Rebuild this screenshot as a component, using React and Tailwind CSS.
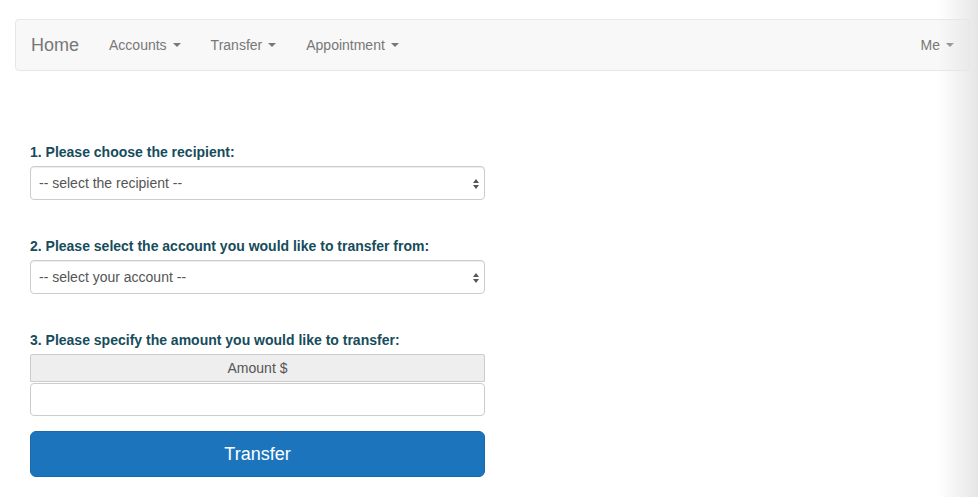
import { useState } from 'react';

function Caret() {
  return <span className="ml-[6px] inline-block h-0 w-0 border-x-4 border-t-4 border-x-transparent border-t-[#777] align-middle" />;
}

function NavItem({ label }) {
  return (
    <a className="flex items-center px-[15px] text-[14px] text-[#777]">
      {label}
      <Caret />
    </a>
  );
}

function SelectBox({ placeholder }) {
  return (
    <div className="relative mt-[3px] flex h-[34px] items-center rounded-[4px] border border-[#ccc] bg-white pl-[8px] text-[14px] text-[#555] shadow-[inset_0_1px_1px_rgba(0,0,0,0.075)]">
      {placeholder}
      <svg className="absolute right-[4px] top-[11px]" width="8" height="12" viewBox="0 0 8 12">
        <path d="M4 1 L7 5 H1 Z" fill="#555" />
        <path d="M4 11 L7 7 H1 Z" fill="#555" />
      </svg>
    </div>
  );
}

function Label({ children }) {
  return <label className="block text-[14px] leading-[21px] font-bold text-[#164c5c]">{children}</label>;
}

export default function App() {
  const [amount, setAmount] = useState('');

  return (
    <div className="relative h-[497px] w-[978px] overflow-hidden bg-white pt-[19px] font-['Liberation_Sans',Arial,sans-serif]">
      {/* Navbar */}
      <nav className="mx-[15px] mr-[8px] flex h-[52px] items-center rounded-[4px] border border-[#e7e7e7] bg-[#f8f8f8]">
        <a className="px-[15px] text-[18px] text-[#777]">Home</a>
        <NavItem label="Accounts" />
        <NavItem label="Transfer" />
        <NavItem label="Appointment" />
        <div className="flex-1" />
        <NavItem label="Me" />
      </nav>

      {/* Form */}
      <form className="ml-[30px] mt-[71px] w-[455px]" onSubmit={(e) => e.preventDefault()}>
        <Label>1. Please choose the recipient:</Label>
        <SelectBox placeholder="-- select the recipient --" />

        <div className="mt-[36px]">
          <Label>2. Please select the account you would like to transfer from:</Label>
          <SelectBox placeholder="-- select your account --" />
        </div>

        <div className="mt-[36px]">
          <Label>3. Please specify the amount you would like to transfer:</Label>
          <div className="mt-[3px] flex h-[28px] items-center justify-center rounded-t-[2px] border border-[#ccc] bg-[#eee] text-[14px] text-[#555]">
            Amount $
          </div>
          <input
            value={amount}
            onChange={(e) => setAmount(e.target.value)}
            className="mt-[1px] block h-[33px] w-full rounded-[4px] border border-[#ccc] bg-white px-[12px] text-[14px] outline-none"
          />
        </div>

        <button
          type="submit"
          className="mt-[15px] h-[46px] w-full rounded-[6px] border border-[#1a6aab] bg-[#1c75bc] text-[18px] text-white"
        >
          Transfer
        </button>
      </form>

      {/* right edge shade */}
      <div className="pointer-events-none absolute right-0 top-0 h-full w-[40px] bg-gradient-to-r from-transparent to-[#e6e6e6]" />
    </div>
  );
}
